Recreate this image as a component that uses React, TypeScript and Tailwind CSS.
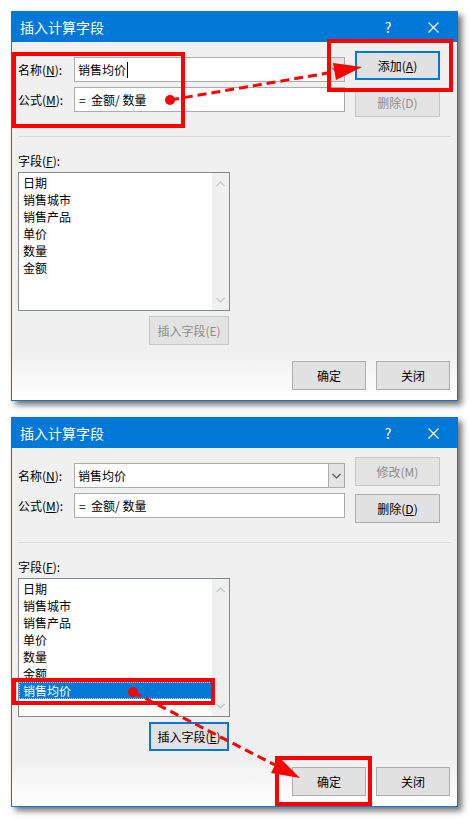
import React from 'react';

type BtnProps = {
    children: React.ReactNode;
    w: string;
    disabled?: boolean;
    focused?: boolean;
};

function Btn({ children, w, disabled, focused }: BtnProps) {
    let cls = 'border border-[#adadad] bg-[#e1e1e1] text-black';
    if (disabled) cls = 'border border-[#c6c6c6] bg-[#e3e3e3] text-[#8d8d8d]';
    if (focused) cls = 'border-2 border-[#0078d7] bg-[#e1e1e1] text-black';
    return (
        <div className={`${w} h-[29px] flex items-center justify-center text-[12px] leading-[16px] ${cls}`}>
            {children}
        </div>
    );
}

function Chevron({ up, color }: { up?: boolean; color: string }) {
    return (
        <svg width="9" height="6" viewBox="0 0 9 6">
            <path d={up ? 'M0.5 5 L4.5 1 L8.5 5' : 'M0.5 1 L4.5 5 L8.5 1'} fill="none" stroke={color} strokeWidth="1.2" />
        </svg>
    );
}

const fields = ['日期', '销售城市', '销售产品', '单价', '数量', '金额'];

function Dialog({ second }: { second?: boolean }) {
    const items = second ? [...fields, '销售均价'] : fields;
    return (
        <div className="w-[447px] h-[390px] flex flex-col border border-[#0078d7] shadow-[4px_4px_6px_rgba(0,0,0,0.55)] bg-[linear-gradient(to_bottom,#f0f0f0_88%,#ffffff_100%)]">
            {/* title bar */}
            <div className="h-[30px] shrink-0 bg-[#0078d7] flex items-center pl-[8px] text-white text-[14px] leading-[18px]">
                <span>插入计算字段</span>
                <span className="ml-auto w-[14px] text-center">?</span>
                <svg className="ml-[33px] mr-[18px]" width="11" height="11" viewBox="0 0 11 11">
                    <path d="M0.5 0.5 L10.5 10.5 M10.5 0.5 L0.5 10.5" stroke="white" strokeWidth="1.1" />
                </svg>
            </div>

            <div className="flex flex-col px-[6px] text-[12px] text-black">
                <div className="flex items-start">
                    <div className="mt-[15px] flex flex-col gap-[5px]">
                        <div className="flex items-center">
                            <span className="w-[56px] leading-[16px]">名称(<u>N</u>):</span>
                            <div className="w-[271px] h-[25px] border border-[#acacac] bg-white flex items-center">
                                <span className="pl-[3px] leading-[16px]">销售均价</span>
                                {!second && <span className="w-px h-[16px] bg-black ml-[1px]" />}
                                <div className="ml-auto w-[16px] h-[23px] bg-[#e3e3e3] border-l border-[#acacac] flex items-center justify-center">
                                    <Chevron color="#555555" />
                                </div>
                            </div>
                        </div>
                        <div className="flex items-center">
                            <span className="w-[56px] leading-[16px]">公式(<u>M</u>):</span>
                            <div className="w-[271px] h-[25px] border border-[#acacac] bg-white flex items-center">
                                <span className="pl-[4px] leading-[16px] whitespace-pre">=  金额/ 数量</span>
                            </div>
                        </div>
                    </div>
                    <div className="ml-[10px] mt-[9px] flex flex-col gap-[8px]">
                        {second ? (
                            <Btn w="w-[85px]" disabled>修改(M)</Btn>
                        ) : (
                            <Btn w="w-[85px]" focused>添加(<u>A</u>)</Btn>
                        )}
                        {second ? (
                            <Btn w="w-[85px]">删除(<u>D</u>)</Btn>
                        ) : (
                            <Btn w="w-[85px]" disabled>删除(D)</Btn>
                        )}
                    </div>
                </div>

                <div className="mt-[19px] h-px bg-[#dadada]" />

                <div className="mt-[16px] h-[16px] leading-[16px]">字段(<u>F</u>):</div>
                <div className="mt-[3px] w-[212px] h-[139px] border border-[#828790] bg-white flex">
                    <div className="flex-1 pt-px flex flex-col">
                        {items.map((it) => (
                            <div
                                key={it}
                                className={
                                    it === '销售均价'
                                        ? 'h-[17px] leading-[16px] pl-[3px] bg-[#0078d7] text-white border border-dotted border-[#f3c27a]'
                                        : 'h-[17px] leading-[17px] pl-[4px]'
                                }
                            >
                                {it}
                            </div>
                        ))}
                    </div>
                    <div className="w-[17px] bg-[#f0f0f0] flex flex-col items-center justify-between pt-[8px] pb-[7px]">
                        <Chevron up color="#c4c4c4" />
                        <Chevron color="#c4c4c4" />
                    </div>
                </div>

                <div className="mt-[5px] ml-[131px]">
                    {second ? (
                        <Btn w="w-[80px]" focused>插入字段(<u>E</u>)</Btn>
                    ) : (
                        <Btn w="w-[80px]" disabled>插入字段(E)</Btn>
                    )}
                </div>

                <div className="mt-[16px] pr-px flex justify-end gap-[10px]">
                    <Btn w="w-[74px]">确定</Btn>
                    <Btn w="w-[74px]">关闭</Btn>
                </div>
            </div>
        </div>
    );
}

export default function App() {
    return (
        <div className="relative w-[470px] h-[820px] bg-white pt-[11px] pl-[11px] flex flex-col gap-[16px] font-['Noto_Sans_CJK_SC','Noto_Sans',sans-serif]">
            <Dialog />
            <Dialog second />

            {/* red annotations */}
            <svg className="absolute inset-0 pointer-events-none" width="470" height="820" viewBox="0 0 470 820">
                <g fill="none" stroke="#ff0000" strokeWidth="4">
                    <rect x="14" y="54" width="169" height="72" />
                    <rect x="329" y="41" width="122" height="49" />
                    <rect x="14" y="680" width="199" height="23" />
                    <rect x="277" y="758" width="93" height="46" />
                </g>
                <g stroke="#ff0000" strokeWidth="3" strokeDasharray="9 5" fill="none">
                    <line x1="170" y1="100" x2="334" y2="72" />
                    <line x1="133" y1="692" x2="275" y2="765" />
                </g>
                <g fill="#ff0000">
                    <circle cx="170" cy="100" r="5" />
                    <polygon points="362,67 333,63 336,80" />
                    <circle cx="133" cy="692" r="5" />
                    <polygon points="300,778 279,757 271,773" />
                </g>
            </svg>
        </div>
    );
}
